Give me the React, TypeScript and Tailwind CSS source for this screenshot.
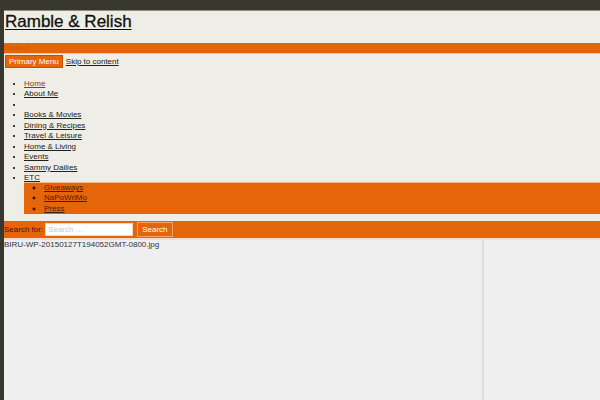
import React from "react";

const items = [
  { t: "Home", cur: true },
  { t: "About Me" },
  { t: "" },
  { t: "Books & Movies" },
  { t: "Dining & Recipes" },
  { t: "Travel & Leisure" },
  { t: "Home & Living" },
  { t: "Events" },
  { t: "Sammy Dailies" },
];

export default function App() {
  return (
    <div
      className="w-[600px] h-[400px] overflow-hidden bg-[#38382f] pt-[10px] pl-[4px]"
      style={{ fontFamily: '"Liberation Sans", Arial, sans-serif' }}
    >
      <div className="h-full bg-[#eeede6] border-t border-[#8e8e84] flex flex-col">
        <h1 className="text-[17px] leading-[20px] mt-[1px] ml-[1px] text-[#111] underline decoration-1 underline-offset-2 [-webkit-text-stroke:0.3px_#111]">
          Ramble &amp; Relish
        </h1>
        <div className="mt-[11px] h-[11px] bg-[#e5660a] border-b border-[#f3c49c] text-[8px] leading-[10px] text-[#d35a06] pl-[1px]">
          Search
        </div>
        <div className="flex items-center mt-[1px]">
          <div className="h-[13px] px-[3px] ml-[1px] bg-[#e5660a] border border-[#c65205] text-white text-[8px] leading-[11px]">
            Primary Menu
          </div>
          <span className="ml-[3px] text-[8px] leading-[11px] text-[#222] underline">Skip to content</span>
        </div>
        <ul className="mt-[11px] text-[8px] leading-[10.45px] list-disc pl-[20px]">
          {items.map((it, i) => (
            <li key={i}>
              <span className={(it.cur ? "text-[#7a4328]" : "text-[#222]") + " underline"}>{it.t}</span>
            </li>
          ))}
          <li>
            <span className="text-[#222] underline">ETC</span>
            <ul className="-mt-[1.5px] [list-style-type:circle] bg-[#e5660a] border-t border-[#f3b98a] pl-[20px]">
              <li><span className="text-[#4a1f00] underline">Giveaways</span></li>
              <li><span className="text-[#4a1f00] underline">NaPoWriMo</span></li>
              <li><span className="text-[#4a1f00] underline">Press</span></li>
            </ul>
          </li>
        </ul>
        <div className="mt-[7px] h-[17px] bg-[#e5660a] flex items-center text-[8px]">
          <span className="text-[#3a1a00]">Search for:</span>
          <div className="ml-[2px] w-[88px] h-[13px] bg-white border border-[#f0d8c4] text-[#c8c8c8] leading-[11px] pl-[2px]">
            Search …
          </div>
          <div className="ml-[4px] h-[15px] px-[4px] border border-[#f2a36a] text-white leading-[13px]">
            Search
          </div>
        </div>
        <div className="flex-1 bg-[#efefef] border-t-2 border-[#f6dcc6] flex">
          <div className="w-[478px] text-[8px] leading-[10px] text-[#333]">
            BIRU-WP-20150127T194052GMT-0800.jpg
          </div>
          <div className="w-[2px] bg-[#dcdcdc]" />
          <div className="flex-1" />
        </div>
      </div>
    </div>
  );
}
